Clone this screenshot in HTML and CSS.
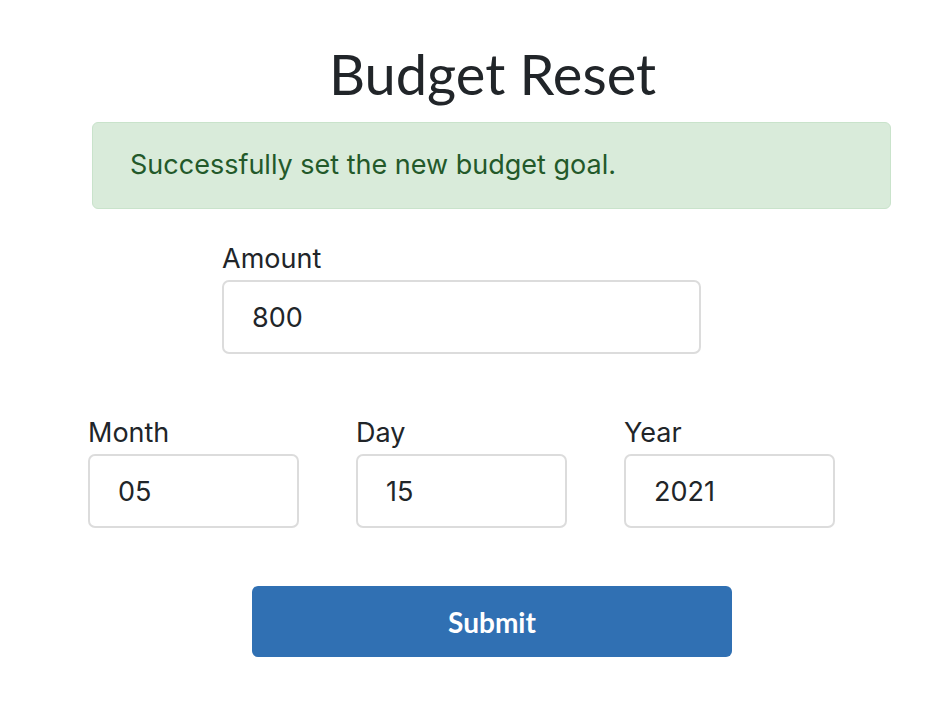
FILE: index.html
```html
<!DOCTYPE html>
<html lang="en">
<head>
<meta charset="utf-8">
<title>Budget Reset</title>
<link rel="stylesheet" href="styles.css">
</head>
<body>
<main class="page">
  <h1 class="title">Budget Reset</h1>
  <div class="alert">Successfully set the new budget goal.</div>
  <form class="form">
    <div class="field amount">
      <label class="label" for="amount">Amount</label>
      <input class="input" id="amount" type="text" value="800">
    </div>
    <div class="date-row">
      <div class="field">
        <label class="label" for="month">Month</label>
        <input class="input" id="month" type="text" value="05">
      </div>
      <div class="field">
        <label class="label" for="day">Day</label>
        <input class="input" id="day" type="text" value="15">
      </div>
      <div class="field">
        <label class="label" for="year">Year</label>
        <input class="input" id="year" type="text" value="2021">
      </div>
    </div>
    <button class="submit" type="button">Submit</button>
  </form>
</main>
</body>
</html>
```

FILE: styles.css
```css
html, body {
  margin: 0;
  padding: 0;
  background: #ffffff;
}

body {
  font-family: Inter, Roboto, "Liberation Sans", sans-serif;
  color: #212529;
}

.page {
  width: 799px;
  margin-left: 92px;
  padding-top: 40px;
  display: flex;
  flex-direction: column;
}

.title {
  margin: 0;
  font-family: Lato, sans-serif;
  font-weight: 400;
  font-size: 56px;
  line-height: 68px;
  text-align: center;
  padding-left: 2px;
  color: #212529;
}

.alert {
  margin-top: 14px;
  height: 85px;
  box-sizing: content-box;
  border: 1px solid #c9e3cb;
  border-radius: 6px;
  background: #d9ebda;
  color: #23592a;
  font-size: 27px;
  line-height: 84px;
  padding: 0 37px;
}

.form {
  display: flex;
  flex-direction: column;
}

.field {
  display: flex;
  flex-direction: column;
}

.amount {
  margin-top: 33px;
  margin-left: 130px;
  width: 479px;
}

.label {
  font-size: 27px;
  line-height: 34px;
  margin-bottom: 4px;
  color: #212529;
}

.input {
  box-sizing: border-box;
  height: 74px;
  border: 2px solid #dcdcdc;
  border-radius: 7px;
  padding: 0 0 0 28px;
  font-family: Inter, Roboto, "Liberation Sans", sans-serif;
  font-size: 27px;
  color: #212529;
  background: #fff;
  outline: none;
}

.date-row {
  margin-top: 62px;
  margin-left: -4px;
  display: flex;
  gap: 57px;
}

.date-row .field {
  width: 211px;
}

.submit {
  margin-top: 58px;
  margin-left: 160px;
  width: 480px;
  height: 71px;
  border: none;
  border-radius: 6px;
  background: #3070b3;
  color: #ffffff;
  font-family: Lato, sans-serif;
  font-weight: 700;
  font-size: 28px;
  cursor: pointer;
}
```
